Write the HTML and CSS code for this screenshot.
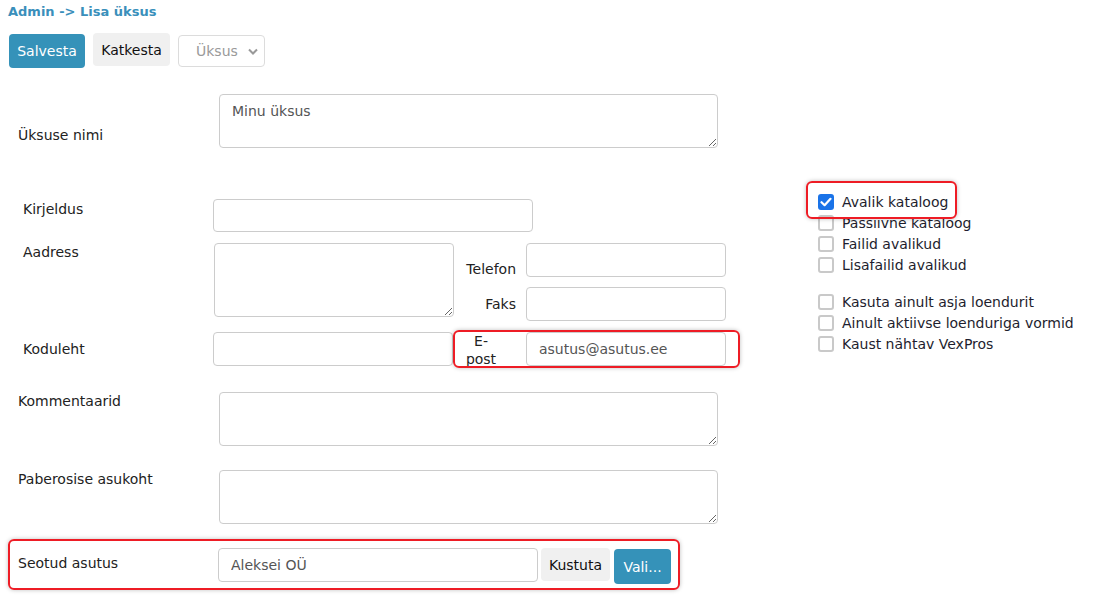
FILE: index.html
```html
<!DOCTYPE html>
<html lang="et">
<head>
<meta charset="utf-8">
<title>Lisa üksus</title>
<link rel="stylesheet" href="styles.css">
</head>
<body>
<div class="page">
  <div class="crumb">Admin -&gt; Lisa üksus</div>
  <div class="toolbar">
    <button class="btn btn-primary btn-save">Salvesta</button>
    <button class="btn btn-light">Katkesta</button>
    <div class="select-wrap">
      <select class="select" disabled><option>Üksus</option></select>
      <svg class="chev" width="10" height="7" viewBox="0 0 10 7"><path d="M1 1.5 L5 5.5 L9 1.5" fill="none" stroke="#999" stroke-width="2"/></svg>
    </div>
  </div>

  <div class="main">
    <div class="form">
      <div class="row row-name">
        <label class="lbl lbl-name">Üksuse nimi</label>
        <textarea class="ta">Minu üksus</textarea>
      </div>

      <div class="group">
        <label class="g-lbl g-kirj">Kirjeldus</label>
        <input class="inp inp-kirj" type="text">

        <label class="g-lbl g-aadr">Aadress</label>
        <textarea class="ta ta-aadr"></textarea>

        <label class="g-rlbl g-tel">Telefon</label>
        <input class="inp inp-side g-tel-i" type="text">

        <label class="g-rlbl g-faks">Faks</label>
        <input class="inp inp-side g-faks-i" type="text">

        <label class="g-lbl g-kod">Koduleht</label>
        <input class="inp inp-kod" type="text">

        <label class="g-epost"><span>E-post</span></label>
        <input class="inp inp-side g-epost-i" type="text" value="asutus@asutus.ee">
      </div>

      <div class="row row-komm">
        <label class="lbl">Kommentaarid</label>
        <textarea class="ta"></textarea>
      </div>

      <div class="row row-pab">
        <label class="lbl">Paberosise asukoht</label>
        <textarea class="ta"></textarea>
      </div>

      <div class="row row-seot">
        <label class="lbl lbl-seot">Seotud asutus</label>
        <input class="inp inp-seot" type="text" value="Aleksei OÜ">
        <button class="btn btn-light btn-kust">Kustuta</button>
        <button class="btn btn-primary btn-vali">Vali...</button>
      </div>
    </div>

    <div class="checks">
      <div class="chk"><span class="cb cb-on"><svg width="12" height="10" viewBox="0 0 12 10"><path d="M1.5 5.2 L4.6 8.2 L10.5 1.8" fill="none" stroke="#fff" stroke-width="2.2" stroke-linecap="round" stroke-linejoin="round"/></svg></span>Avalik kataloog</div>
      <div class="chk"><span class="cb"></span>Passiivne kataloog</div>
      <div class="chk"><span class="cb"></span>Failid avalikud</div>
      <div class="chk"><span class="cb"></span>Lisafailid avalikud</div>
      <div class="chk-gap"></div>
      <div class="chk"><span class="cb"></span>Kasuta ainult asja loendurit</div>
      <div class="chk"><span class="cb"></span>Ainult aktiivse loenduriga vormid</div>
      <div class="chk"><span class="cb"></span>Kaust nähtav VexPros</div>
    </div>
  </div>

  <div class="mark mark-avalik"></div>
  <div class="mark mark-epost"></div>
  <div class="mark mark-seot"></div>
</div>
</body>
</html>
```
FILE: styles.css
```css
* { box-sizing: border-box; }
html, body { margin: 0; padding: 0; background: #fff; }
body {
  font-family: "DejaVu Sans", Verdana, sans-serif;
  font-size: 14px;
  color: #222;
}
.page {
  position: relative;
  width: 1104px;
  height: 602px;
  padding-left: 8px;
  overflow: hidden;
}
.crumb {
  margin-top: 4px;
  height: 16px;
  line-height: 16px;
  font-size: 13px;
  font-weight: bold;
  color: #3a8fbb;
}
.toolbar {
  margin-top: 13px;
  display: flex;
  align-items: flex-start;
  gap: 8px;
  padding-left: 1px;
}
.btn {
  font-family: "DejaVu Sans", Verdana, sans-serif;
  font-size: 14px;
  border: none;
  border-radius: 4px;
  padding: 0;
  cursor: pointer;
}
.btn-primary { background: #3592b9; color: #fff; }
.btn-light { background: #f0f0f0; color: #111; }
.btn-save { width: 76px; height: 34px; margin-top: 1px; }
.toolbar .btn-light { width: 77px; height: 33px; }
.select-wrap { position: relative; margin-top: 2px; }
.select {
  appearance: none;
  -webkit-appearance: none;
  width: 87px;
  height: 32px;
  border: 1px solid #dcdcdc;
  border-radius: 4px;
  background: #fff;
  color: #9a9a9a;
  font-family: "DejaVu Sans", Verdana, sans-serif;
  font-size: 14px;
  padding: 0 0 0 17px;
  opacity: 1;
}
.chev { position: absolute; right: 7px; top: 13px; }

.main {
  margin-top: 26px;
  display: flex;
  align-items: flex-start;
}
.form { width: 740px; display: flex; flex-direction: column; }

.row { display: flex; align-items: flex-start; }
.lbl {
  margin-left: 10px;
  width: 201px;
  flex: none;
  line-height: 18px;
}
.lbl-name { padding-top: 32px; }
.ta {
  width: 499px;
  height: 54px;
  border: 1px solid #cccccc;
  border-radius: 4px;
  font-family: "DejaVu Sans", Verdana, sans-serif;
  font-size: 14px;
  color: #555;
  padding: 8px 12px;
  resize: both;
  display: block;
  margin: 0;
}
.inp {
  height: 34px;
  border: 1px solid #cccccc;
  border-radius: 4px;
  font-family: "DejaVu Sans", Verdana, sans-serif;
  font-size: 14px;
  color: #555;
  padding: 0 12px;
  margin: 0;
  display: block;
}

.group {
  margin-top: 51px;
  margin-left: 15px;
  display: grid;
  grid-template-columns: 190px 241px 72px 200px;
  grid-template-rows: 33px 11px 34px 10px 34px 11px 34px;
}
.g-lbl { line-height: 18px; }
.g-kirj { grid-column: 1; grid-row: 1; padding-top: 1px; }
.inp-kirj { grid-column: 2 / 4; grid-row: 1; width: 320px; height: 33px; }
.g-aadr { grid-column: 1; grid-row: 3 / 6; padding-top: 0; }
.ta-aadr { grid-column: 2; grid-row: 3 / 6; width: 240px; height: 74px; margin-left: 1px; }
.g-rlbl { text-align: right; padding-right: 10px; line-height: 18px; }
.g-tel { grid-column: 3; grid-row: 3; align-self: end; margin-bottom: -1px; }
.g-faks { grid-column: 3; grid-row: 5; align-self: center; }
.inp-side { grid-column: 4; width: 200px; }
.g-tel-i { grid-row: 3; }
.g-faks-i { grid-row: 5; }
.g-kod { grid-column: 1; grid-row: 7; align-self: center; }
.inp-kod { grid-column: 2; grid-row: 7; width: 240px; }
.g-epost { grid-column: 3; grid-row: 7; align-self: center; }
.g-epost span {
  display: block;
  width: 40px;
  margin-left: 7px;
  margin-top: 1px;
  text-align: center;
  line-height: 18px;
}
.g-epost-i { grid-row: 7; }

.row-komm { margin-top: 26px; }
.row-pab { margin-top: 24px; }
.row-seot { margin-top: 24px; align-items: flex-start; }
.lbl-seot { width: 200px; padding-top: 6px; }
.inp-seot { width: 320px; }
.btn-kust { width: 69px; height: 33px; margin-left: 3px; }
.btn-vali { width: 57px; height: 35px; margin-left: 4px; margin-top: 1px; }

.checks {
  margin-left: 70px;
  padding-top: 97px;
  font-size: 14px;
  color: #1e1e2e;
}
.chk {
  display: flex;
  align-items: center;
  height: 21px;
  white-space: nowrap;
}
.chk-gap { height: 16px; }
.cb {
  width: 16px;
  height: 16px;
  flex: none;
  margin-right: 8px;
  border: 2px solid #c9c9c9;
  border-radius: 3px;
  background: #fff;
  display: flex;
  align-items: center;
  justify-content: center;
}
.cb-on { background: #1a73e8; border-color: #1a73e8; }

.mark {
  position: absolute;
  border: 2px solid #ee1c25;
  border-radius: 6px;
  box-shadow: 0 0 4px rgba(0, 0, 0, 0.25);
}
.mark-avalik { left: 806px; top: 181px; width: 151px; height: 38px; }
.mark-epost { left: 453px; top: 330px; width: 287px; height: 38px; }
.mark-seot { left: 8px; top: 539px; width: 672px; height: 51px; }
```
